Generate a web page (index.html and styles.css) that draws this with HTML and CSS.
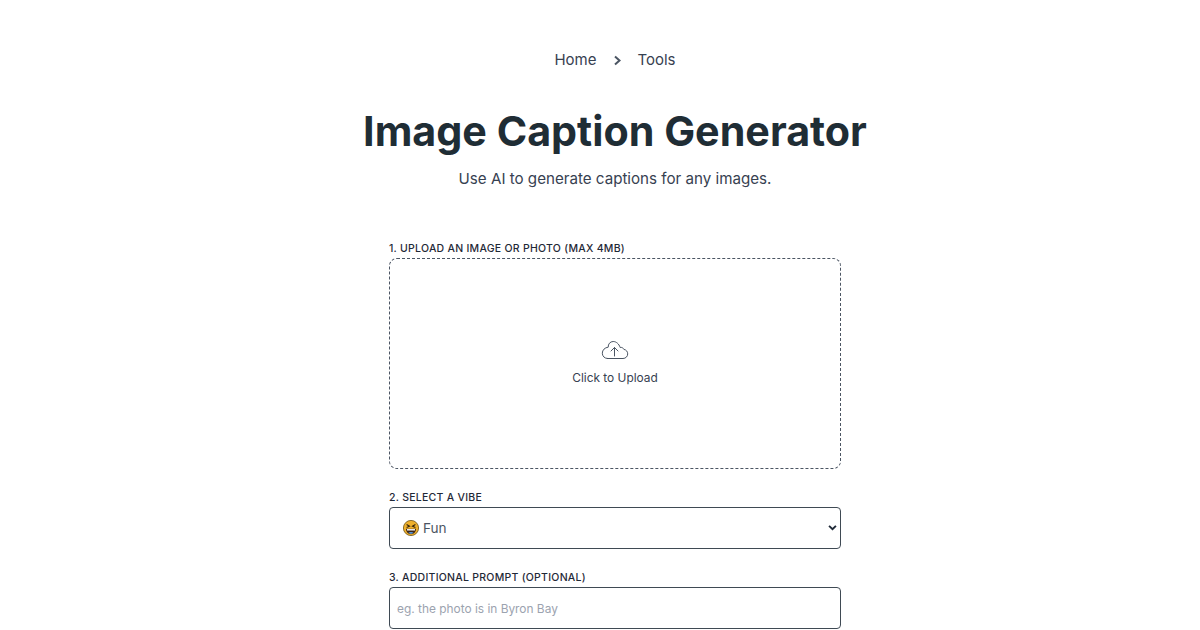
FILE: index.html
```html
<!DOCTYPE html>
<html lang="en">
<head>
<meta charset="utf-8">
<title>Image Caption Generator</title>
<link rel="stylesheet" href="styles.css">
</head>
<body>
<nav class="crumbs">
  <a class="crumb">Home</a>
  <svg class="crumb-sep" viewBox="0 0 9 11" width="9" height="11" fill="none" stroke="currentColor" stroke-width="2" stroke-linejoin="miter"><path d="M3 1.500L7.500 5.500 3 9.500"/></svg>
  <a class="crumb">Tools</a>
</nav>
<h1 class="title">Image Caption Generator</h1>
<p class="subtitle">Use AI to generate captions for any images.</p>
<form class="form">
  <div class="field field-upload">
    <div class="label">1. Upload an image or photo (max 4MB)</div>
    <div class="drop">
      <svg class="cloud" viewBox="0 0 28 22" width="28" height="22" fill="none" stroke="currentColor" stroke-width="1" stroke-linecap="round" stroke-linejoin="round"><path d="M6.500 19.500h15.500c2.800 0 4.700-2.200 4.700-4.600 0-2.300-1.600-4.200-3.800-4.500-.6-1.500-2.200-2.300-3.700-1.900C17.900 4.800 15.200 2.500 12.200 2.500 9.200 2.500 7 5 7.200 8.200 3.900 8.500 1.300 11 1.300 14.200c0 3 2.300 5.300 5.200 5.300z"/><path d="M13.500 17V8.500M10 12l3.500-3.500L17 12"/></svg>
      <span class="drop-text">Click to Upload</span>
    </div>
  </div>
  <div class="field field-vibe">
    <div class="label">2. Select a vibe</div>
    <div class="select">
      <span class="select-value">
        <svg class="emoji" viewBox="0 0 16 16" width="16" height="16"><circle cx="8" cy="8" r="7.600" fill="#eeb02c" stroke="#6f5212" stroke-width=".8"/><path d="M3.600 4.600l2.900 1.600-2.900 1.200M12.400 4.600L9.500 6.200l2.900 1.200" fill="none" stroke="#33240e" stroke-width="1.100"/><path d="M3 8.800h10c0 3.200-2.100 5.400-5 5.400s-5-2.200-5-5.400z" fill="#3d2415"/><path d="M4 9.100h8v1.400H4z" fill="#fff"/><path d="M5.400 12.800c1.600-1 3.600-1 5.200 0-1.400 1.200-3.800 1.200-5.200 0z" fill="#5aa0e8"/></svg>
        Fun
      </span>
      <svg class="chev" viewBox="0 0 10 7" width="9" height="6" fill="none" stroke="currentColor" stroke-width="2.200"><path d="M1 1l4 4 4-4"/></svg>
    </div>
  </div>
  <div class="field">
    <div class="label">3. Additional prompt (optional)</div>
    <input class="input" type="text" placeholder="eg. the photo is in Byron Bay">
  </div>
</form>
</body>
</html>
```
FILE: styles.css
```css
* { box-sizing: border-box; }
html, body { margin: 0; height: 630px; overflow: hidden; }
body {
  font-family: Inter, "Liberation Sans", sans-serif;
  background: #fff;
  color: #374151;
  display: flex;
  flex-direction: column;
  align-items: center;
  padding: 48px 0 0 30px;
}
.crumbs {
  display: flex;
  align-items: center;
  justify-content: center;
  gap: 16px;
  height: 24px;
  font-size: 15px;
  line-height: 24px;
  color: #374151;
}
.crumb-sep { color: #4b5563; }
.title {
  margin: 29px 0 0;
  font-size: 41.250px;
  line-height: 60px;
  font-weight: 700;
  color: #1f2d35;
  text-align: center;
}
.subtitle {
  margin: 6px 0 0;
  font-size: 15.150px;
  line-height: 24px;
  color: #374151;
  text-align: center;
}
.form {
  width: 452px;
  margin-top: 50px;
  display: flex;
  flex-direction: column;
}
.field-upload { margin-bottom: 21px; }
.field-vibe { margin-bottom: 21px; }
.label {
  font-size: 10.500px;
  line-height: 16px;
  font-weight: 550;
  letter-spacing: 0.025em;
  text-transform: uppercase;
  color: #1f2937;
  margin-bottom: 1px;
}
.drop {
  height: 211px;
  border: 1px dashed #4b5563;
  border-radius: 8px;
  display: flex;
  flex-direction: column;
  align-items: center;
  justify-content: center;
  gap: 9px;
  padding-bottom: 2px;
}
.cloud { color: #4b5563; }
.drop-text { font-size: 11.900px; line-height: 16px; color: #374151; }
.select {
  height: 42px;
  border: 1px solid #3f4a54;
  border-radius: 4px;
  display: flex;
  align-items: center;
  justify-content: space-between;
  padding: 0 3px 0 13px;
  font-size: 13.600px;
  color: #4b5563;
}
.select-value { display: flex; align-items: center; gap: 4px; }
.chev { color: #1f2937; }
.input {
  display: block;
  width: 100%;
  height: 42px;
  border: 1px solid #3f4a54;
  border-radius: 4px;
  padding: 0 7px;
  font-family: inherit;
  font-size: 11.900px;
  color: #374151;
  background: #fff;
  outline: none;
}
.input::placeholder { color: #9ca3af; opacity: 1; }
```
